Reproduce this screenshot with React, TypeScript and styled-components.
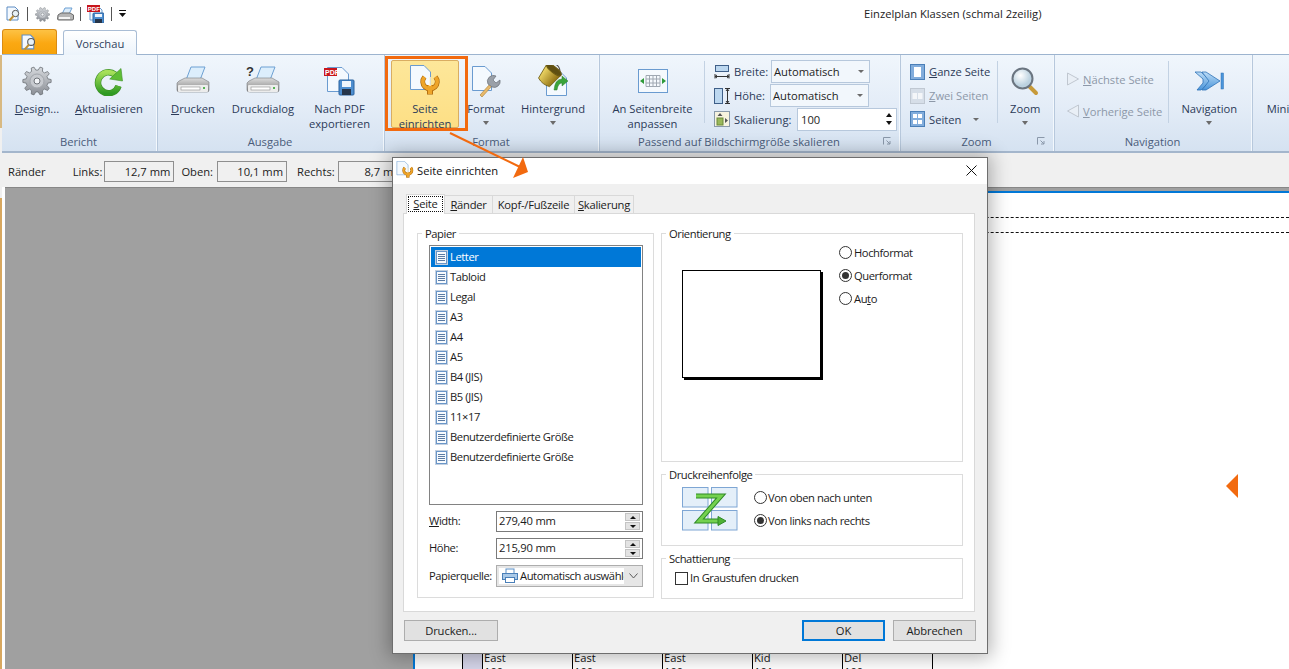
import React from "react";
import styled, { createGlobalStyle } from "styled-components";

const Global = createGlobalStyle`
  html, body { margin: 0; padding: 0; background: #fff; }
  body { font-family: "Open Sans", "Noto Sans", "Liberation Sans", sans-serif; font-size: 11.2px; color: #1b1b1b; }
  * { box-sizing: border-box; }
  svg { flex: none; }
`;

const Root = styled.div`
  position: relative; width: 1289px; height: 669px; overflow: hidden; display: flex;
`;
const LeftEdge = styled.div`
  width: 2px; flex: none;
  background: linear-gradient(#fff 0, #fff 55px, #d8b982 55px, #d8b982 128px, #f0f0f0 128px, #f0f0f0 198px, #d8a860 198px);
`;
const Main = styled.div`flex: 1; min-width: 0; display: flex; flex-direction: column;`;

const TitleBar = styled.div`height: 28px; flex: none; display: flex; align-items: center; position: relative; padding-left: 4px;`;
const Quick = styled.div`display: flex; align-items: center; width: 1px; flex: 1;`;
const QuickSep = styled.span<{ $m?: number }>`width: 1px; height: 14px; background: #555; margin: 0 ${(p) => p.$m ?? 6}px; flex: none;`;
const QuickSlot = styled.span<{ $ml: number }>`margin-left: ${(p) => p.$ml}px; display: flex; flex: none;`;
const WindowTitle = styled.div`position: absolute; left: 862px; top: 6px; color: #222; white-space: nowrap;`;

const TabRow = styled.div`height: 26px; flex: none; display: flex; align-items: flex-end; position: relative; z-index: 1;`;
const FileTab = styled.div`
  width: 55px; height: 25px; border: 1px solid #d98b14; border-bottom: none; border-radius: 3px 3px 0 0;
  background: linear-gradient(#fdc244, #fba812 55%, #f6a20a); display: flex; align-items: center; justify-content: center;
`;
const ActiveTab = styled.div`
  width: 74px; height: 25px; margin-left: 6px; margin-bottom: -1px; border: 1px solid #a9bdd5; border-bottom: none; border-radius: 3px 3px 0 0;
  background: linear-gradient(#fff, #ecf3fb); color: #2f3f5c; display: flex; align-items: center; justify-content: center;
`;

const Ribbon = styled.div`
  height: 99px; flex: none; display: flex; border-top: 1px solid #9db4cf; border-bottom: 2px solid #a4b6cc;
  background: linear-gradient(#f0f6fc, #e3ecf7 55%, #d5e2f1);
`;
const Group = styled.div<{ $w: number }>`
  position: relative; flex: none; width: ${(p) => p.$w}px; display: flex; flex-direction: column;
  border-right: 1px solid #b7c8dc; box-shadow: inset -1px 0 0 #f3f8fd;
`;
const GroupBody = styled.div<{ $pl?: number }>`height: 76px; display: flex; padding: 1px 0 0 ${(p) => p.$pl ?? 0}px; flex: none; color: #2b3a58;`;
const GroupLabel = styled.div<{ $pr?: number }>`flex: 1; text-align: center; color: #4a5c7a; line-height: 21px; padding-right: ${(p) => p.$pr ?? 2}px;`;
const Launcher = styled.span`position: absolute; right: 9px; bottom: 6px; display: flex;`;
const Big = styled.div<{ $w: number; $ml?: number; $pt?: number }>`
  width: ${(p) => p.$w}px; margin-left: ${(p) => p.$ml ?? 0}px; flex: none; display: flex; flex-direction: column; align-items: center;
  text-align: center; line-height: 15px; padding-top: ${(p) => p.$pt ?? 5}px; color: #2b3a58; white-space: nowrap;
`;
const BigIcon = styled.div`height: 40px; display: flex; align-items: center; justify-content: center; flex: none;`;
const Caret = styled.span`width: 0; height: 0; margin-top: 5px; border: 3.5px solid transparent; border-top: 4px solid #6b6b6b; border-bottom: none;`;
const Callout = styled.div`
  flex: none; width: 83px; height: 75px; border: 3px solid #f26a0f; padding: 1px 2px 0 2px; display: flex; position: relative; z-index: 2;
`;
const Highlight = styled.div`
  flex: 1; display: flex; flex-direction: column; align-items: center; border: 1px solid #d9ad62; border-radius: 2px;
  background: linear-gradient(#fde79a, #fddf85); text-align: center; line-height: 15px; color: #2b3a58; margin-right: 4px; margin-left: 1px;
`;
const VSep = styled.div<{ $ml: number }>`width: 1px; height: 62px; margin: 5px 0 0 ${(p) => p.$ml}px; background: #c3d2e3; flex: none;`;
const SmallStack = styled.div<{ $ml?: number; $pt?: number }>`display: flex; flex-direction: column; margin-left: ${(p) => p.$ml ?? 0}px; padding-top: ${(p) => p.$pt ?? 5}px; flex: none;`;
const SmallRow = styled.div<{ $h?: number; $off?: boolean }>`
  height: ${(p) => p.$h ?? 24}px; display: flex; align-items: center; gap: 4px; white-space: nowrap; color: ${(p) => (p.$off ? "#8d98a8" : "#2b3a58")};
`;
const SmallLabel = styled.span<{ $w: number }>`width: ${(p) => p.$w}px; flex: none;`;
const RibbonCombo = styled.div<{ $w: number; $ml?: number }>`
  width: ${(p) => p.$w}px; height: 23px; margin-left: ${(p) => p.$ml ?? 0}px; border: 1px solid #b7c8dc; background: #f2f7fc; display: flex; align-items: center; justify-content: space-between; padding: 0 5px 0 2px; color: #1e1e1e; flex: none;
`;
const RibbonSpin = styled(RibbonCombo)`background: #fff; padding: 0 4px 0 3px;`;
const SpinArrows = styled.span`display: flex; flex-direction: column; gap: 4px;`;
const Up = styled.span`width: 0; height: 0; border: 3.5px solid transparent; border-bottom: 4px solid #111; border-top: none;`;
const Down = styled.span`width: 0; height: 0; border: 3.5px solid transparent; border-top: 4px solid #111; border-bottom: none;`;
const SmallCaret = styled.span`width: 0; height: 0; border: 3px solid transparent; border-top: 3px solid #6b6b6b; border-bottom: none; margin-left: 8px;`;

const MarginBar = styled.div`
  height: 34px; flex: none; background: #f0f0f0; display: flex; align-items: center; padding: 3px 0 0 6px; white-space: nowrap; color: #222;
`;
const MarginLabel = styled.span<{ $ml: number }>`margin-left: ${(p) => p.$ml}px;`;
const MarginBox = styled.span<{ $ml: number }>`
  width: 70px; height: 21px; margin-left: ${(p) => p.$ml}px; border: 1px solid #8f8f8f; display: flex; align-items: center; justify-content: flex-end; padding-right: 3px; background: #f0f0f0; flex: none;
`;

const Workspace = styled.div`
  flex: 1; min-height: 0; margin-left: 3px; background: #a0a0a0; border-top: 1px solid #878787; padding: 3px 0 0 408px; display: flex;
`;
const Page = styled.div`flex: 1; background: #fff; border-top: 2px solid #0078d7; border-left: 2px solid #0078d7; position: relative;`;
const Dash = styled.div<{ $mt: number }>`border-top: 1px dashed #111; margin-top: ${(p) => p.$mt}px;`;
const Grid = styled.div`
  margin: 418px 0 0 47px; display: grid; grid-template-columns: 19px repeat(5, 90px); width: 471px;
  border-left: 1px solid #000; border-right: 1px solid #000;
`;
const RowHead = styled.div`background: #d6d6ea; height: 40px;`;
const Cell = styled.div`border-left: 1px solid #000; padding-left: 1px; line-height: 14px; height: 40px; color: #111;`;
const Marker = styled.svg`position: absolute; left: 811px; top: 281px;`;

const Overlay = styled.svg`position: absolute; left: 0; top: 0; z-index: 5; pointer-events: none;`;

const Dialog = styled.div`
  position: absolute; left: 392px; top: 157px; width: 596px; height: 497px; z-index: 4; border: 1px solid #6e6e6e;
  background: #f0f0f0; box-shadow: 0 0 18px 3px rgba(0, 0, 0, 0.3); display: flex; flex-direction: column;
`;
const DialogTitle = styled.div`height: 26px; flex: none; background: #fff; display: flex; align-items: center; padding: 0 10px 2px 3px; gap: 3px; color: #111;`;
const DialogTitleText = styled.span`flex: 1;`;
const DialogBody = styled.div`flex: 1; padding: 10px 12px 0 10px; display: flex; flex-direction: column; letter-spacing: -0.42px;`;
const Tabs = styled.div`display: flex; padding-left: 3px; height: 20px; flex: none; position: relative; z-index: 1; letter-spacing: -0.25px;`;
const TabItem = styled.div<{ $w: number; $on?: boolean }>`
  width: ${(p) => p.$w}px; height: ${(p) => (p.$on ? 20 : 19)}px; margin-top: ${(p) => (p.$on ? 0 : 1)}px; border: 1px solid #d9d9d9; border-left: ${(p) => (p.$on ? "1px solid #d9d9d9" : "none")}; border-bottom: ${(p) => (p.$on ? "none" : "1px solid #d9d9d9")};
  background: ${(p) => (p.$on ? "#fff" : "#f0f0f0")}; display: flex; align-items: center; justify-content: center; padding-bottom: 1px; white-space: nowrap;
`;
const FocusText = styled.span`outline: 1px dotted #111; padding: 0 4px; line-height: 14px;`;
const Panel = styled.div`
  width: 572px; height: 399px; margin-top: -1px; background: #fff; border: 1px solid #d9d9d9; padding: 11px 0 0 13px; display: flex; gap: 7px; flex: none;
`;
const Field = styled.fieldset<{ $w: number; $h: number; $pl?: number }>`
  width: ${(p) => p.$w}px; height: ${(p) => p.$h}px; margin: 0; border: 1px solid #dcdcdc; padding: 0 0 0 ${(p) => p.$pl ?? 11}px; min-width: 0; flex: none;
`;
const Legend = styled.legend`padding: 0 3px; margin-left: -7px; line-height: 16px; color: #1b1b1b; transform: translateY(1px);`;
const RightCol = styled.div`display: flex; flex-direction: column; gap: 4px;`;
const PaperList = styled.div`width: 214px; height: 260px; margin-top: 4px; border: 1px solid #828282; padding: 1px;`;
const PaperRow = styled.div<{ $on?: boolean }>`
  height: 20px; display: flex; align-items: center; gap: 2px; padding-left: 4px; background: ${(p) => (p.$on ? "#0078d7" : "transparent")}; color: ${(p) => (p.$on ? "#fff" : "#1b1b1b")};
`;
const PaperName = styled.span`margin-bottom: 2px;`;
const FormRow = styled.div<{ $mt: number }>`display: flex; align-items: center; width: 214px; margin-top: ${(p) => p.$mt}px;`;
const FormLabel = styled.span`width: 67px; flex: none; white-space: nowrap; padding-bottom: 2px;`;
const NumInput = styled.div`
  width: 147px; height: 21px; border: 1px solid #7a7a7a; display: flex; align-items: center; justify-content: space-between; padding: 0 1px 0 2px;
`;
const NumValue = styled.span`padding-bottom: 2px; letter-spacing: -0.2px;`;
const SpinCol = styled.span`display: flex; flex-direction: column; gap: 1px; margin-right: 1px;`;
const SpinBtn = styled.span`width: 15px; height: 8px; background: #e3e3e3; border: 1px solid #c4c4c4; display: flex; align-items: center; justify-content: center;`;
const TinyUp = styled.span`width: 0; height: 0; border: 3px solid transparent; border-bottom: 3px solid #111; border-top: none;`;
const TinyDown = styled.span`width: 0; height: 0; border: 3px solid transparent; border-top: 3px solid #111; border-bottom: none;`;
const SelectBox = styled.div`
  width: 147px; height: 22px; border: 1px solid #adadad; background: #e6e6e6; display: flex; align-items: center; padding: 2px 0 2px 2px;
`;
const SelectValue = styled.div`width: 125px; height: 16px; background: #fff; display: flex; align-items: center; gap: 2px; overflow: hidden; white-space: nowrap; padding-left: 3px; flex: none;`;
const SelectText = styled.span`margin-bottom: 2px;`;
const SelectChevron = styled.span`flex: 1; display: flex; justify-content: center;`;
const OrientBody = styled.div`display: flex; gap: 18px;`;
const PagePreview = styled.div`width: 139px; height: 108px; margin: 29px 0 0 9px; background: #fff; border: 1px solid #000; box-shadow: 2px 2px 0 #000; flex: none;`;
const RadioCol = styled.div<{ $mt?: number }>`display: flex; flex-direction: column; margin-top: ${(p) => p.$mt ?? 0}px;`;
const RadioRow = styled.label<{ $gap?: number }>`height: 23px; display: flex; align-items: center; gap: ${(p) => p.$gap ?? 2}px; white-space: nowrap;`;
const RadioDot = styled.span<{ $on?: boolean }>`
  width: 13px; height: 13px; border-radius: 50%; border: 1px solid #333; background: #fff; display: flex; align-items: center; justify-content: center; flex: none;
  &::after { content: ""; width: 7px; height: 7px; border-radius: 50%; background: ${(p) => (p.$on ? "#333" : "transparent")}; }
`;
const OrderBody = styled.div`display: flex; gap: 16px; padding-top: 5px; padding-left: 9px;`;
const CheckRow = styled.label`display: flex; align-items: flex-start; gap: 2px; margin: 5px 0 0 2px; line-height: 14px;`;
const CheckBox = styled.span`width: 13px; height: 13px; margin-top: 1px; border: 1px solid #333; background: #fff; flex: none;`;
const Footer = styled.div`display: flex; align-items: flex-start; margin-top: 8px; padding-left: 1px; width: 573px; letter-spacing: -0.1px;`;
const Btn = styled.div<{ $w: number; $ml?: string; $primary?: boolean }>`
  width: ${(p) => p.$w}px; height: 21px; margin-left: ${(p) => p.$ml ?? "0"}; background: #e1e1e1; border: ${(p) => (p.$primary ? "2px solid #0078d7" : "1px solid #adadad")};
  display: flex; align-items: center; justify-content: center; flex: none; color: #1b1b1b; padding-bottom: 1px;
`;
const Mn = styled.span`text-decoration: underline;`;

const gearPath = (cx: number, cy: number, r1: number, r2: number, n: number) => {
  const pts: string[] = [];
  for (let i = 0; i < n; i++) {
    const a = (i / n) * Math.PI * 2;
    const s = (Math.PI * 2) / n;
    const at = (r: number, t: number) => `${(cx + r * Math.cos(t)).toFixed(2)},${(cy + r * Math.sin(t)).toFixed(2)}`;
    pts.push(at(r1, a - s * 0.32), at(r2, a - s * 0.16), at(r2, a + s * 0.16), at(r1, a + s * 0.32));
  }
  return `M${pts.join("L")}Z`;
};

const Gear = ({ s = 30 }: { s?: number }) => (
  <svg width={s} height={s} viewBox="0 0 30 30">
    <defs><linearGradient id="gg" x1="0" y1="0" x2="0" y2="1"><stop offset="0" stopColor="#d6d9dd" /><stop offset="1" stopColor="#8b8f96" /></linearGradient></defs>
    <path d={gearPath(15, 15, 11, 14.2, 10)} fill="url(#gg)" stroke="#6f7379" strokeWidth="0.8" />
    <circle cx="15" cy="15" r="7" fill="#c7cacf" stroke="#a2a6ac" />
    <circle cx="15" cy="15" r="3" fill="#f2f4f7" stroke="#6f7379" />
  </svg>
);
const Refresh = () => (
  <svg width="30" height="30" viewBox="0 0 30 30">
    <defs><linearGradient id="rg" x1="0" y1="0" x2="0" y2="1"><stop offset="0" stopColor="#a6e05a" /><stop offset="1" stopColor="#2f9a22" /></linearGradient></defs>
    <path d="M21 8.5 A10.5 10.5 0 1 0 24.5 20" fill="none" stroke="#3c9028" strokeWidth="6.5" />
    <path d="M21 8.5 A10.5 10.5 0 1 0 24.5 20" fill="none" stroke="url(#rg)" strokeWidth="5.2" />
    <polygon points="15.7,13 28.5,15 27,2.5" fill="#5fbd35" stroke="#3c9028" strokeWidth="0.6" />
  </svg>
);
const Printer = ({ q }: { q?: boolean }) => (
  <svg width="34" height="30" viewBox="0 0 34 30">
    <defs><linearGradient id="pg" x1="0" y1="0" x2="0" y2="1"><stop offset="0" stopColor="#dcdcdc" /><stop offset="1" stopColor="#7f7f7f" /></linearGradient></defs>
    <polygon points="10,14 15,1 29,1 24,14" fill="#dcEefc" stroke="#6da0d3" />
    <path d="M3 15 L9 12 H26 L33 16 V24 Q33 26 31 26 H4 Q1 26 1 24 V17 Z" fill="url(#pg)" stroke="#77797c" strokeWidth="0.6" />
    <rect x="2" y="19" width="30" height="7" rx="1" fill="#ececec" />
    <rect x="5" y="21" width="19" height="3" fill="#fff" stroke="#8c8c8c" strokeWidth="0.6" />
    <rect x="27" y="21" width="2" height="2" fill="#55b555" />
    {q && <text x="0" y="10" fontSize="13" fontWeight="700" fill="#333" fontFamily="Liberation Sans, sans-serif">?</text>}
  </svg>
);
const DocShape = ({ x = 0, y = 0, w = 22, h = 26 }: { x?: number; y?: number; w?: number; h?: number }) => (
  <path d={`M${x + 0.5} ${y + 0.5} H${x + w - 7} L${x + w - 0.5} ${y + 7} V${y + h - 0.5} H${x + 0.5} Z`} fill="#f4f9fe" stroke="#6a9bd0" />
);
const PdfIcon = () => (
  <svg width="32" height="30" viewBox="0 0 32 30">
    <DocShape x={3} y={1} w={22} h={25} />
    <rect x="0" y="2" width="13" height="8" fill="#c8151b" />
    <text x="1" y="9" fontSize="7" fontWeight="700" fill="#fff" fontFamily="Liberation Sans, sans-serif">PDF</text>
    <rect x="15" y="14" width="15" height="15" rx="1" fill="#4d8ed0" stroke="#2a639f" />
    <rect x="18" y="15" width="9" height="6" fill="#eef5fc" />
    <rect x="18" y="23" width="9" height="6" fill="#26354a" />
  </svg>
);
const QuickPdf = () => (
  <svg width="17" height="18" viewBox="0 0 17 18">
    <path d="M3 1 H11 L15 5 V15 H3 Z" fill="#f4f9fe" stroke="#6a9bd0" />
    <rect x="0" y="0" width="13" height="7" fill="#c8151b" />
    <text x="0.8" y="6" fontSize="6" fontWeight="700" fill="#fff" fontFamily="Liberation Sans, sans-serif">PDF</text>
    <rect x="6" y="8" width="11" height="10" rx="1" fill="#4d8ed0" stroke="#2a639f" />
    <rect x="8" y="9" width="7" height="3" fill="#eef5fc" /><rect x="8" y="14" width="7" height="4" fill="#26354a" />
  </svg>
);
const SetupIcon = ({ s = 32 }: { s?: number }) => (
  <svg width={s} height={s} viewBox="0 0 32 32">
    <DocShape x={1} y={0} w={21} h={25} />
    <path d="M15.5 10 A7.2 7.2 0 1 0 26.5 10" transform="translate(0 2)" fill="none" stroke="#a9650c" strokeWidth="5" />
    <path d="M21 20 V29.5" stroke="#a9650c" strokeWidth="6" />
    <path d="M15.5 10 A7.2 7.2 0 1 0 26.5 10" transform="translate(0 2)" fill="none" stroke="#eea52a" strokeWidth="3.6" />
    <path d="M21 20 V29" stroke="#eea52a" strokeWidth="4.4" />
    <path d="M21 12 V21" stroke="#fff2d2" strokeWidth="1.5" />
  </svg>
);
const FormatIcon = () => (
  <svg width="30" height="32" viewBox="0 0 30 32">
    <DocShape x={1} y={1} w={20} h={25} />
    <path d="M9 30 L19 19 L21 21 L11 32 Z" fill="#e8b96a" stroke="#a87c32" strokeWidth="0.6" />
    <path d="M17 19 A6 6 0 0 1 25 11 L22 15 L25 18 L29 15 A6 6 0 0 1 21 22 Z" fill="#9aa0a8" stroke="#6a7078" strokeWidth="0.7" />
  </svg>
);
const BucketIcon = () => (
  <svg width="32" height="32" viewBox="0 0 32 32">
    <defs><linearGradient id="bk" x1="0" y1="0" x2="1" y2="0"><stop offset="0" stopColor="#f3dc6a" /><stop offset="1" stopColor="#8d6d10" /></linearGradient></defs>
    <DocShape x={9} y={6} w={21} h={25} />
    <g transform="rotate(38 12 11)">
      <path d="M5 2 Q12 -7 19 2" fill="none" stroke="#555" strokeWidth="1.2" />
      <path d="M3 3 H21 L19 19 Q12 22 5 19 Z" fill="url(#bk)" stroke="#6b5a12" strokeWidth="0.8" />
      <ellipse cx="12" cy="3" rx="9" ry="3" fill="#5f4f12" stroke="#6b5a12" />
    </g>
    <path d="M17 25 Q18 14 25 14 V11 L31 16 L25 21 V18 Q21 18 20 25 Z" fill="#3aa33a" stroke="#2a7c2a" strokeWidth="0.5" />
  </svg>
);
const FitIcon = () => (
  <svg width="30" height="24" viewBox="0 0 30 24">
    <rect x="0.5" y="0.5" width="29" height="23" fill="#f5f9fd" stroke="#6a9bd0" />
    <path d="M8 6.5 H22 V17.5 H8 Z M8 10 H22 M8 14 H22 M11.5 6 V18 M15 6 V18 M18.5 6 V18" fill="none" stroke="#a0a8b2" />
    <path d="M2 12 L6 9 V15 Z M28 12 L24 9 V15 Z" fill="#2f9a3a" />
  </svg>
);
const WidthIcon = () => (
  <svg width="16" height="14" viewBox="0 0 16 14">
    <rect x="1.5" y="0.5" width="13" height="6" fill="#bcd7ef" stroke="#3f5f88" />
    <path d="M1 9 V13.5 M15 9 V13.5 M1 11.5 H15 M3 10 L1 11.5 L3 13 M13 10 L15 11.5 L13 13" fill="none" stroke="#333" />
  </svg>
);
const HeightIcon = () => (
  <svg width="16" height="16" viewBox="0 0 16 16">
    <rect x="0.5" y="0.5" width="8" height="15" fill="#bcd7ef" stroke="#3f5f88" />
    <path d="M11 0.5 H16 M11 15.5 H16 M13.5 1 V15 M12 3 L13.5 1 L15 3 M12 13 L13.5 15 L15 13" fill="none" stroke="#333" />
  </svg>
);
const ScaleIcon = () => (
  <svg width="16" height="16" viewBox="0 0 16 16">
    <rect x="0.5" y="0.5" width="15" height="15" fill="#f7f3df" stroke="#8a9aaa" />
    <rect x="3" y="7" width="6" height="7" fill="#9ab85a" stroke="#6b8a3a" />
    <path d="M6 2 L8.5 5 H3.5 Z M11 7 L14 9.5 L11 12 Z" fill="#555" />
  </svg>
);
const PageTile = ({ mode, off }: { mode: 1 | 2 | 4; off?: boolean }) => (
  <svg width="15" height="16" viewBox="0 0 15 16">
    <rect x="0.5" y="0.5" width="14" height="15" fill={off ? "#d6dee8" : "#82addc"} stroke={off ? "#c0c8d2" : "#4a7fb8"} />
    {mode === 1 && <rect x="4" y="3" width="7" height="10" fill="#fff" />}
    {mode === 2 && <><rect x="2.5" y="5" width="4.5" height="6" fill="#f4f6f9" /><rect x="8" y="5" width="4.5" height="6" fill="#f4f6f9" /></>}
    {mode === 4 && <><rect x="3" y="3" width="4" height="4" fill="#fff" /><rect x="8" y="3" width="4" height="4" fill="#fff" /><rect x="3" y="9" width="4" height="4" fill="#fff" /><rect x="8" y="9" width="4" height="4" fill="#fff" /></>}
  </svg>
);
const Magnifier = () => (
  <svg width="30" height="30" viewBox="0 0 30 30">
    <defs><radialGradient id="mg" cx="0.4" cy="0.35"><stop offset="0" stopColor="#fff" /><stop offset="1" stopColor="#bcd2e0" /></radialGradient></defs>
    <path d="M18 19 L26 27" stroke="#c79a3a" strokeWidth="4" strokeLinecap="round" />
    <circle cx="12.5" cy="12.5" r="10" fill="url(#mg)" stroke="#6b7580" strokeWidth="2" />
  </svg>
);
const NavTri = ({ left }: { left?: boolean }) => (
  <svg width="12" height="14" viewBox="0 0 12 14">
    <path d={left ? "M11.5 1 V13 L0.5 7 Z" : "M0.5 1 V13 L11.5 7 Z"} fill="#e9eff6" stroke="#c0c7d0" />
  </svg>
);
const NavBig = () => (
  <svg width="30" height="20" viewBox="0 0 30 20">
    <defs><linearGradient id="ng" x1="0" y1="0" x2="0" y2="1"><stop offset="0" stopColor="#bcdcf6" /><stop offset="1" stopColor="#4a95da" /></linearGradient></defs>
    <path d="M1 1 H7 L17 10 L7 19 H3 L9 12 V8 Z" fill="url(#ng)" stroke="#2f72b8" strokeWidth="0.8" />
    <path d="M8 1 H12 L26 10 L12 19 H8 L15 10 Z" fill="url(#ng)" stroke="#2f72b8" strokeWidth="0.8" />
    <rect x="27" y="2" width="2.5" height="16" fill="#4a95da" stroke="#2f72b8" strokeWidth="0.5" />
  </svg>
);
const LauncherIcon = () => (
  <svg width="8" height="8" viewBox="0 0 8 8"><path d="M0.5 7.5 V0.5 H7.5 M4 7 H7 V4 M3.5 3.5 L7 7" fill="none" stroke="#8a98aa" /></svg>
);
const QuickPreview = ({ s = 16 }: { s?: number }) => (
  <svg width={s} height={s} viewBox="0 0 16 16">
    <path d="M1 1 H9 L12 4 V14 H1 Z" fill="#f4f9fe" stroke="#5f8ec4" />
    <circle cx="9.5" cy="7.5" r="3.2" fill="#e8f2f7" stroke="#555" />
    <path d="M7.5 10 L3.5 14.5" stroke="#c09030" strokeWidth="2" />
  </svg>
);
const QuickPrinter = () => (
  <svg width="17" height="15" viewBox="0 0 17 15">
    <polygon points="5,7 8,1 15,1 12,7" fill="#dcecfa" stroke="#6da0d3" />
    <path d="M1 8 L4 6 H13 L16.5 8 V12 Q16.5 13 15 13 H2 Q0.5 13 0.5 12 Z" fill="#b5b5b5" stroke="#6b6b6b" />
    <rect x="2" y="10" width="11" height="2" fill="#f4f4f4" />
  </svg>
);
const QuickMenu = () => (
  <svg width="8" height="8" viewBox="0 0 8 8"><path d="M0 0.5 H7" stroke="#111" /><path d="M0 3 H7 L3.5 7 Z" fill="#111" /></svg>
);
const ListDoc = () => (
  <svg width="13" height="15" viewBox="0 0 13 15">
    <rect x="0.5" y="0.5" width="12" height="14" fill="#fff" stroke="#c3d0e0" />
    <rect x="1.5" y="1.5" width="10" height="12" fill="#f8fbfe" stroke="#6a96c8" />
    <path d="M3 4.5 H10 M3 6.5 H10 M3 8.5 H10 M3 10.5 H10" stroke="#5b7ba3" />
  </svg>
);
const SmallPrinter = () => (
  <svg width="16" height="16" viewBox="0 0 16 16">
    <rect x="4" y="1" width="8" height="5" fill="#fff" stroke="#5a8fc8" />
    <rect x="0.5" y="5.5" width="15" height="6" fill="#a9c9e8" stroke="#4a7fb8" />
    <rect x="3.5" y="9.5" width="9" height="5" fill="#fff" stroke="#4a7fb8" />
  </svg>
);
const OrderIcon = () => (
  <svg width="56" height="44" viewBox="0 0 56 44">
    {[[0, 0], [29, 0], [0, 23], [29, 23]].map(([x, y]) => (
      <rect key={`${x}-${y}`} x={x + 0.5} y={y + 0.5} width="25.5" height="19.5" fill="#e4eff9" stroke="#7ea6d4" />
    ))}
    <path d="M14 9 H39 L17 34 H38" fill="none" stroke="#2f8a27" strokeWidth="5" />
    <path d="M14 9 H39 L17 34 H38" fill="none" stroke="#74d14f" strokeWidth="3" />
    <polygon points="36,29.5 44,34 36,38.5" fill="#4fb235" stroke="#2f8a27" />
  </svg>
);
const ChevronD = () => (
  <svg width="9" height="6" viewBox="0 0 9 6"><path d="M0.5 0.5 L4.5 5 L8.5 0.5" fill="none" stroke="#5a5a5a" /></svg>
);
const CloseX = () => (
  <svg width="11" height="11" viewBox="0 0 11 11"><path d="M0.5 0.5 L10.5 10.5 M10.5 0.5 L0.5 10.5" stroke="#111" /></svg>
);

const papers = ["Letter", "Tabloid", "Legal", "A3", "A4", "A5", "B4 (JIS)", "B5 (JIS)", "11×17", "Benutzerdefinierte Größe", "Benutzerdefinierte Größe"];
const cells = [["East", "100"], ["East", "100"], ["East", "100"], ["Kid", "101"], ["Del", "100"]];

export default function App() {
  return (
    <Root>
      <Global />
      <LeftEdge />
      <Main>
        <TitleBar>
          <Quick>
            <QuickPreview />
            <QuickSep $m={5} />
            <QuickSlot $ml={2}><Gear s={15} /></QuickSlot>
            <QuickSlot $ml={7}><QuickPrinter /></QuickSlot>
            <QuickSep $m={6} />
            <QuickPdf />
            <QuickSep $m={7} />
            <QuickMenu />
          </Quick>
          <WindowTitle>Einzelplan Klassen (schmal 2zeilig)</WindowTitle>
        </TitleBar>
        <TabRow>
          <FileTab><QuickPreview s={17} /></FileTab>
          <ActiveTab>Vorschau</ActiveTab>
        </TabRow>
        <Ribbon>
          <Group $w={156}>
            <GroupBody>
              <Big $w={70}><BigIcon><Gear /></BigIcon><span><Mn>D</Mn>esign...</span></Big>
              <Big $w={74}><BigIcon><Refresh /></BigIcon><span><Mn>A</Mn>ktualisieren</span></Big>
            </GroupBody>
            <GroupLabel>Bericht</GroupLabel>
          </Group>
          <Group $w={227}>
            <GroupBody>
              <Big $w={70}><BigIcon><Printer /></BigIcon><span><Mn>D</Mn>rucken</span></Big>
              <Big $w={70}><BigIcon><Printer q /></BigIcon><span>Druckdialog</span></Big>
              <Big $w={83}><BigIcon><PdfIcon /></BigIcon><span>Nach PDF<br />exportieren</span></Big>
            </GroupBody>
            <GroupLabel>Ausgabe</GroupLabel>
          </Group>
          <Group $w={215}>
            <GroupBody>
              <Callout>
                <Highlight><BigIcon><SetupIcon /></BigIcon><span>Seite<br />einrichten</span></Highlight>
              </Callout>
              <Big $w={36}><BigIcon><FormatIcon /></BigIcon><span>Format</span><Caret /></Big>
              <Big $w={90} $ml={4}><BigIcon><BucketIcon /></BigIcon><span>Hintergrund</span><Caret /></Big>
            </GroupBody>
            <GroupLabel>Format</GroupLabel>
          </Group>
          <Group $w={301}>
            <GroupBody>
              <Big $w={105}><BigIcon><FitIcon /></BigIcon><span>An Seitenbreite<br />anpassen</span></Big>
              <VSep $ml={-1} />
              <SmallStack $ml={9} $pt={4}>
                <SmallRow><WidthIcon /><SmallLabel $w={37}>Breite:</SmallLabel><RibbonCombo $w={99} $ml={-4}>Automatisch<SmallCaret /></RibbonCombo></SmallRow>
                <SmallRow><HeightIcon /><SmallLabel $w={37}>Höhe:</SmallLabel><RibbonCombo $w={99} $ml={-5}>Automatisch<SmallCaret /></RibbonCombo></SmallRow>
                <SmallRow><ScaleIcon /><SmallLabel $w={60}>Skalierung:</SmallLabel><RibbonSpin $w={100} $ml={-1}>100<SpinArrows><Up /><Down /></SpinArrows></RibbonSpin></SmallRow>
              </SmallStack>
            </GroupBody>
            <GroupLabel $pr={22}>Passend auf Bildschirmgröße skalieren</GroupLabel>
            <Launcher><LauncherIcon /></Launcher>
          </Group>
          <Group $w={154}>
            <GroupBody $pl={9}>
              <SmallStack $pt={4}>
                <SmallRow><PageTile mode={1} /><span><Mn>G</Mn>anze Seite</span></SmallRow>
                <SmallRow $off><PageTile mode={2} off /><span><Mn>Z</Mn>wei Seiten</span></SmallRow>
                <SmallRow><PageTile mode={4} /><span>Seiten</span><SmallCaret /></SmallRow>
              </SmallStack>
              <VSep $ml={7} />
              <Big $w={54}><BigIcon><Magnifier /></BigIcon><span>Zoom</span><Caret /></Big>
            </GroupBody>
            <GroupLabel>Zoom</GroupLabel>
            <Launcher><LauncherIcon /></Launcher>
          </Group>
          <Group $w={198}>
            <GroupBody $pl={12}>
              <SmallStack $pt={7}>
                <SmallRow $h={32} $off><NavTri /><span><Mn>N</Mn>ächste Seite</span></SmallRow>
                <SmallRow $h={32} $off><NavTri left /><span><Mn>V</Mn>orherige Seite</span></SmallRow>
              </SmallStack>
              <VSep $ml={6} />
              <Big $w={80}><BigIcon><NavBig /></BigIcon><span>Navigation</span><Caret /></Big>
            </GroupBody>
            <GroupLabel>Navigation</GroupLabel>
          </Group>
          <Big $w={26} $ml={12} $pt={46}><span>Mini</span></Big>
        </Ribbon>
        <MarginBar>
          <span>Ränder</span>
          <MarginLabel $ml={27}>Links:</MarginLabel>
          <MarginBox $ml={2}>12,7 mm</MarginBox>
          <MarginLabel $ml={7}>Oben:</MarginLabel>
          <MarginBox $ml={4}>10,1 mm</MarginBox>
          <MarginLabel $ml={10}>Rechts:</MarginLabel>
          <MarginBox $ml={3}>8,7 mm</MarginBox>
        </MarginBar>
        <Workspace>
          <Page>
            <Dash $mt={24} />
            <Dash $mt={14} />
            <Grid>
              <RowHead />
              {cells.map(([a, b], i) => (
                <Cell key={i}>{a}<br />{b}</Cell>
              ))}
            </Grid>
            <Marker width="12" height="24" viewBox="0 0 12 24"><polygon points="12,0 12,24 0,12" fill="#f26a0f" /></Marker>
          </Page>
        </Workspace>
      </Main>

      <Dialog>
        <DialogTitle>
          <SetupIcon s={18} />
          <DialogTitleText>Seite einrichten</DialogTitleText>
          <CloseX />
        </DialogTitle>
        <DialogBody>
          <Tabs>
            <TabItem $w={39} $on><FocusText><Mn>S</Mn>eite</FocusText></TabItem>
            <TabItem $w={48}><span><Mn>R</Mn>änder</span></TabItem>
            <TabItem $w={82}>Kopf-/Fußzeile</TabItem>
            <TabItem $w={59}><span><Mn>S</Mn>kalierung</span></TabItem>
          </Tabs>
          <Panel>
            <Field $w={237} $h={373}>
              <Legend>Papier</Legend>
              <PaperList>
                {papers.map((p, i) => (
                  <PaperRow key={i} $on={i === 0}><ListDoc /><PaperName>{p}</PaperName></PaperRow>
                ))}
              </PaperList>
              <FormRow $mt={6}>
                <FormLabel><Mn>W</Mn>idth:</FormLabel>
                <NumInput><NumValue>279,40 mm</NumValue><SpinCol><SpinBtn><TinyUp /></SpinBtn><SpinBtn><TinyDown /></SpinBtn></SpinCol></NumInput>
              </FormRow>
              <FormRow $mt={6}>
                <FormLabel>Höhe:</FormLabel>
                <NumInput><NumValue>215,90 mm</NumValue><SpinCol><SpinBtn><TinyUp /></SpinBtn><SpinBtn><TinyDown /></SpinBtn></SpinCol></NumInput>
              </FormRow>
              <FormRow $mt={6}>
                <FormLabel>Papierquelle:</FormLabel>
                <SelectBox>
                  <SelectValue><SmallPrinter /><SelectText>Automatisch auswählen</SelectText></SelectValue>
                  <SelectChevron><ChevronD /></SelectChevron>
                </SelectBox>
              </FormRow>
            </Field>
            <RightCol>
              <Field $w={302} $h={237}>
                <Legend>Orientierung</Legend>
                <OrientBody>
                  <PagePreview />
                  <RadioCol>
                    <RadioRow><RadioDot />Hochformat</RadioRow>
                    <RadioRow><RadioDot $on />Querformat</RadioRow>
                    <RadioRow><RadioDot /><span>Au<Mn>t</Mn>o</span></RadioRow>
                  </RadioCol>
                </OrientBody>
              </Field>
              <Field $w={302} $h={80}>
                <Legend>Druckreihenfolge</Legend>
                <OrderBody>
                  <OrderIcon />
                  <RadioCol $mt={-1}>
                    <RadioRow $gap={1}><RadioDot />Von oben nach unten</RadioRow>
                    <RadioRow $gap={1}><RadioDot $on />Von links nach rechts</RadioRow>
                  </RadioCol>
                </OrderBody>
              </Field>
              <Field $w={302} $h={49}>
                <Legend>Schattierung</Legend>
                <CheckRow><CheckBox />In Graustufen drucken</CheckRow>
              </Field>
            </RightCol>
          </Panel>
          <Footer>
            <Btn $w={94}>Drucken...</Btn>
            <Btn $w={83} $ml="auto" $primary>OK</Btn>
            <Btn $w={83} $ml="8px">Abbrechen</Btn>
          </Footer>
        </DialogBody>
      </Dialog>

      <Overlay width="1289" height="669" viewBox="0 0 1289 669">
        <path d="M450 133 L520 167" stroke="#f26a0f" strokeWidth="2" />
        <polygon points="528,172 523,157 513,178" fill="#f26a0f" />
      </Overlay>
    </Root>
  );
}
